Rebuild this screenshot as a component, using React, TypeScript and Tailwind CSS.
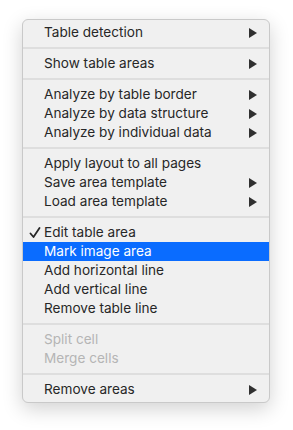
import React from 'react';

type Item =
  | { kind: 'sep' }
  | { kind: 'item'; label: string; sub?: boolean; checked?: boolean; active?: boolean; disabled?: boolean };

const items: Item[] = [
  { kind: 'item', label: 'Table detection', sub: true },
  { kind: 'sep' },
  { kind: 'item', label: 'Show table areas', sub: true },
  { kind: 'sep' },
  { kind: 'item', label: 'Analyze by table border', sub: true },
  { kind: 'item', label: 'Analyze by data structure', sub: true },
  { kind: 'item', label: 'Analyze by individual data', sub: true },
  { kind: 'sep' },
  { kind: 'item', label: 'Apply layout to all pages' },
  { kind: 'item', label: 'Save area template', sub: true },
  { kind: 'item', label: 'Load area template', sub: true },
  { kind: 'sep' },
  { kind: 'item', label: 'Edit table area', checked: true },
  { kind: 'item', label: 'Mark image area', active: true },
  { kind: 'item', label: 'Add horizontal line' },
  { kind: 'item', label: 'Add vertical line' },
  { kind: 'item', label: 'Remove table line' },
  { kind: 'sep' },
  { kind: 'item', label: 'Split cell', disabled: true },
  { kind: 'item', label: 'Merge cells', disabled: true },
  { kind: 'sep' },
  { kind: 'item', label: 'Remove areas', sub: true },
];

function Arrow() {
  return (
    <svg width="8" height="10" viewBox="0 0 8 10" className="shrink-0">
      <path d="M0 0 L8 5 L0 10 Z" fill="currentColor" />
    </svg>
  );
}

function Check() {
  return (
    <svg width="12" height="12" viewBox="0 0 12 12">
      <path d="M1.5 6.5 L4.5 10 L10.5 1" fill="none" stroke="currentColor" strokeWidth="1.8" strokeLinecap="round" strokeLinejoin="round" />
    </svg>
  );
}

export default function App() {
  return (
    <div className="w-[293px] h-[430px] bg-white pt-[19px] pl-[22px]" style={{ fontFamily: 'Inter, "Liberation Sans", sans-serif' }}>
      <div className="w-[248px] rounded-[6px] border border-[#c9c9c9] bg-[#f0f0f0] py-[3px] shadow-[0_6px_20px_rgba(0,0,0,0.18)] overflow-hidden">
        {items.map((it, i) => {
          if (it.kind === 'sep') {
            return (
              <div key={i} className="h-[12px] flex items-center">
                <div className="h-[2px] w-full bg-[#dedede]" />
              </div>
            );
          }
          return (
            <div
              key={i}
              className={
                'h-[19px] flex items-center pr-[12px] text-[13.6px] ' +
                (it.active ? 'bg-[#0a6cff] text-white ' : '') +
                (it.disabled ? 'text-[#b5b5b5] ' : !it.active ? 'text-[#272727] ' : '')
              }
            >
              <div className="w-[21px] flex justify-end pr-[3px] text-[#272727]">{it.checked && <Check />}</div>
              <span className="flex-1 leading-none">{it.label}</span>
              {it.sub && <span className="text-[#303030]"><Arrow /></span>}
            </div>
          );
        })}
      </div>
    </div>
  );
}
